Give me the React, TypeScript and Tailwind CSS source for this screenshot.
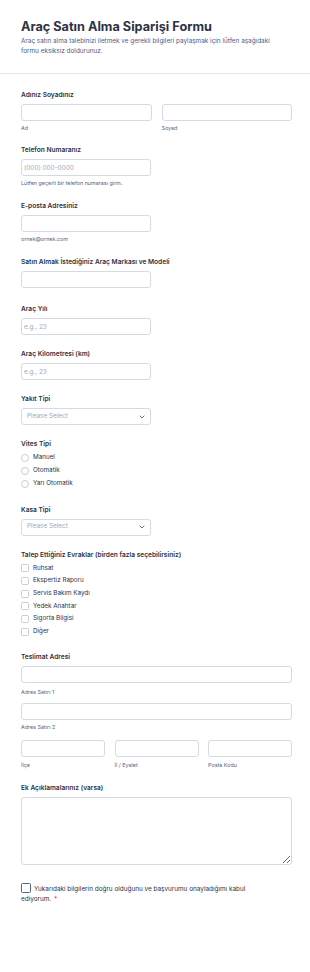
import React from "react";

const FONT = { fontFamily: "Inter, 'Noto Sans', sans-serif" };

const Label = ({ children }: { children: React.ReactNode }) => (
  <div className="mb-1 text-[6.6px] leading-[10px] font-semibold text-[#2c3345]">
    {children}
  </div>
);

const Sub = ({ children, className = "" }: { children: React.ReactNode; className?: string }) => (
  <div className={`mt-[3px] text-[5.4px] leading-[8px] text-[#57647e] ${className}`}>{children}</div>
);

const inputCls =
  "block h-[17px] w-full rounded-[3px] border border-[#d5d9e2] bg-white px-[2px] text-[6.4px] text-[#2c3345] outline-none placeholder:text-[#a0a8b9]";

const Chevron = () => (
  <svg width="6" height="4" viewBox="0 0 6 4" fill="none">
    <path d="M1 1l2 2 2-2" stroke="#57647e" strokeWidth="0.9" strokeLinecap="round" strokeLinejoin="round" />
  </svg>
);

const SelectBox = () => (
  <div className="flex h-[17px] w-[130px] items-center justify-between rounded-[3px] border border-[#d5d9e2] bg-white pl-[5px] pr-[5px] text-[6.4px] text-[#a0a8b9]">
    <span>Please Select</span>
    <Chevron />
  </div>
);

const radios = ["Manuel", "Otomatik", "Yarı Otomatik"];
const docs = ["Ruhsat", "Ekspertiz Raporu", "Servis Bakım Kaydı", "Yedek Anahtar", "Sigorta Bilgisi", "Diğer"];

export default function App() {
  return (
    <div className="min-h-[972px] w-[310px] bg-white" style={FONT}>
      {/* header */}
      <div className="border-b border-[#e5e7ec] pl-[21px] pr-[18px] pt-[17px] pb-[17px]">
        <h1 className="text-[12.7px] leading-[19px] font-bold text-[#2c3345]">Araç Satın Alma Siparişi Formu</h1>
        <p className="w-[264px] text-[6.4px] leading-[10px] text-[#4f5d84]">
          Araç satın alma talebinizi iletmek ve gerekli bilgileri paylaşmak için lütfen aşağıdaki formu eksiksiz
          doldurunuz.
        </p>
      </div>

      <div className="flex flex-col gap-[14px] pl-[21px] pr-[18px] pt-[16px]">
        <div>
          <Label>Adınız Soyadınız</Label>
          <div className="grid grid-cols-2 gap-[10px]">
            <div>
              <input className={inputCls} />
              <Sub>Ad</Sub>
            </div>
            <div>
              <input className={inputCls} />
              <Sub>Soyad</Sub>
            </div>
          </div>
        </div>

        <div className="-mt-[1px]">
          <Label>Telefon Numaranız</Label>
          <div className="w-[130px]">
            <input className={inputCls} placeholder="(000) 000-0000" />
          </div>
          <Sub>Lütfen geçerli bir telefon numarası girin.</Sub>
        </div>

        <div>
          <Label>E-posta Adresiniz</Label>
          <div className="w-[130px]">
            <input className={inputCls} />
          </div>
          <Sub>ornek@ornek.com</Sub>
        </div>

        <div>
          <Label>Satın Almak İstediğiniz Araç Markası ve Modeli</Label>
          <div className="w-[130px]">
            <input className={inputCls} />
          </div>
        </div>

        <div className="pt-[2px]">
          <Label>Araç Yılı</Label>
          <div className="w-[130px]">
            <input className={inputCls} placeholder="e.g., 23" />
          </div>
        </div>

        <div>
          <Label>Araç Kilometresi (km)</Label>
          <div className="w-[130px]">
            <input className={inputCls} placeholder="e.g., 23" />
          </div>
        </div>

        <div>
          <Label>Yakıt Tipi</Label>
          <SelectBox />
        </div>

        <div>
          <Label>Vites Tipi</Label>
          <div className="-mt-[1.5px]">
            {radios.map((r) => (
              <div key={r} className="flex h-[13px] items-center gap-[4px]">
                <span className="h-[8px] w-[8px] rounded-full border border-[#c8cdd8] bg-white" />
                <span className="text-[6.3px] text-[#2c3345]">{r}</span>
              </div>
            ))}
          </div>
        </div>

        <div>
          <Label>Kasa Tipi</Label>
          <SelectBox />
        </div>

        <div>
          <Label>Talep Ettiğiniz Evraklar (birden fazla seçebilirsiniz)</Label>
          <div className="-mt-[1.5px]">
            {docs.map((d) => (
              <div key={d} className="flex h-[12.7px] items-center gap-[4px]">
                <span className="h-[8px] w-[8px] rounded-[1.5px] border border-[#c8cdd8] bg-white" />
                <span className="text-[6.3px] text-[#2c3345]">{d}</span>
              </div>
            ))}
          </div>
        </div>

        <div>
          <Label>Teslimat Adresi</Label>
          <input className={inputCls} />
          <Sub className="mt-[5px]">Adres Satırı 1</Sub>
          <input className={`${inputCls} mt-[7px]`} />
          <Sub>Adres Satırı 2</Sub>
          <div className="mt-[9px] grid grid-cols-3 gap-[9.5px]">
            {["İlçe", "İl / Eyalet", "Posta Kodu"].map((s) => (
              <div key={s}>
                <input className={inputCls} />
                <Sub className="mt-[4px]">{s}</Sub>
              </div>
            ))}
          </div>
        </div>

        <div>
          <Label>Ek Açıklamalarınız (varsa)</Label>
          <textarea className="block h-[68px] w-full rounded-[3px] border border-[#d5d9e2] bg-white outline-none" />
        </div>

        <div className="pt-[2px]">
          <p className="w-[240px] text-[6.4px] leading-[9.5px] text-[#2c3345]">
            <span className="mr-[3px] inline-block h-[10px] w-[10px] translate-y-[2px] rounded-[1.5px] border border-[#57647e] bg-white align-baseline" />
            Yukarıdaki bilgilerin doğru olduğunu ve başvurumu onayladığımı kabul ediyorum.
            <span className="ml-[3px] text-[#f23a3c]">*</span>
          </p>
        </div>
      </div>
    </div>
  );
}
